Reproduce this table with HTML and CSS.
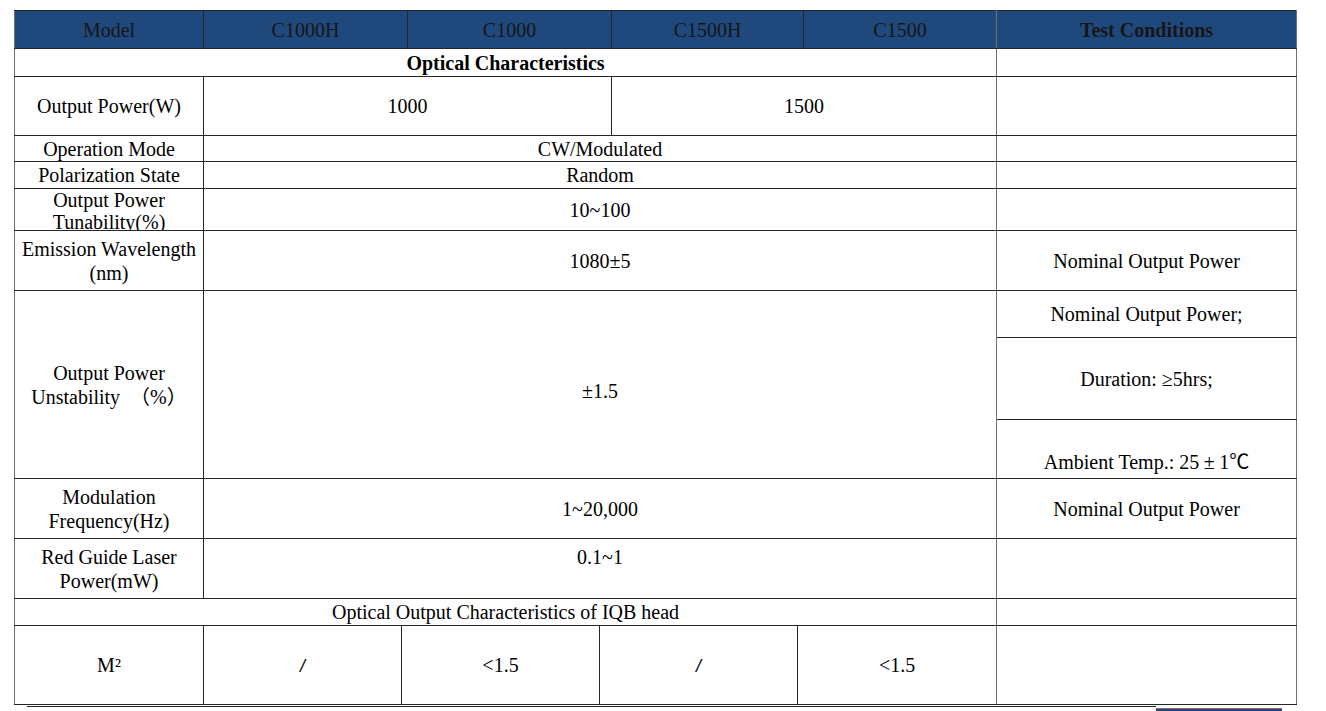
FILE: index.html
```html
<!DOCTYPE html>
<html lang="en">
<head>
<meta charset="utf-8">
<title>Specifications</title>
<link rel="stylesheet" href="styles.css">
</head>
<body>
<table class="spec">
  <colgroup>
    <col class="c1"><col class="c2"><col class="c3"><col class="c4"><col class="c5"><col class="c6"><col class="c7"><col class="c8"><col class="c9">
  </colgroup>
  <thead>
    <tr class="r-head">
      <th class="lbl">Model</th>
      <th colspan="2">C1000H</th>
      <th colspan="2">C1000</th>
      <th colspan="2">C1500H</th>
      <th>C1500</th>
      <th class="tc strong">Test Conditions</th>
    </tr>
  </thead>
  <tbody>
    <tr class="r-28">
      <td class="lbl strong" colspan="8">Optical Characteristics</td>
      <td class="tc"></td>
    </tr>
    <tr class="r-59">
      <td class="lbl">Output Power(W)</td>
      <td colspan="4">1000</td>
      <td colspan="3">1500</td>
      <td class="tc"></td>
    </tr>
    <tr class="r-26">
      <td class="lbl">Operation Mode</td>
      <td colspan="7">CW/Modulated</td>
      <td class="tc"></td>
    </tr>
    <tr class="r-27">
      <td class="lbl">Polarization State</td>
      <td colspan="7">Random</td>
      <td class="tc"></td>
    </tr>
    <tr class="r-42">
      <td class="lbl top"><div class="clip">Output Power Tunability(%)</div></td>
      <td colspan="7">10~100</td>
      <td class="tc"></td>
    </tr>
    <tr class="r-60">
      <td class="lbl">Emission Wavelength (nm)</td>
      <td colspan="7">1080±5</td>
      <td class="tc">Nominal Output Power</td>
    </tr>
    <tr class="r-47">
      <td class="lbl" rowspan="3">Output Power<br>Unstability　（%）</td>
      <td colspan="7" rowspan="3" class="low">±1.5</td>
      <td class="tc">Nominal Output Power;</td>
    </tr>
    <tr class="r-82">
      <td class="tc">Duration: ≥5hrs;</td>
    </tr>
    <tr class="r-59">
      <td class="tc bottom">Ambient Temp.: 25<span class="wide">±</span>1℃</td>
    </tr>
    <tr class="r-60">
      <td class="lbl">Modulation Frequency(Hz)</td>
      <td colspan="7">1~20,000</td>
      <td class="tc">Nominal Output Power</td>
    </tr>
    <tr class="r-60">
      <td class="lbl">Red Guide Laser Power(mW)</td>
      <td colspan="7" class="top pad-top">0.1~1</td>
      <td class="tc"></td>
    </tr>
    <tr class="r-27">
      <td class="lbl" colspan="8">Optical Output Characteristics of IQB head</td>
      <td class="tc"></td>
    </tr>
    <tr class="r-79">
      <td class="lbl">M²</td>
      <td><span class="slash">/</span></td>
      <td colspan="2">&lt;1.5</td>
      <td colspan="2"><span class="slash">/</span></td>
      <td colspan="2">&lt;1.5</td>
      <td class="tc"></td>
    </tr>
  </tbody>
</table>
<div class="footer">
  <div class="footer-line"></div>
  <div class="footer-tab"></div>
</div>
</body>
</html>
```

FILE: styles.css
```css
html, body {
  margin: 0;
  padding: 0;
  background: #ffffff;
}

body {
  font-family: "Liberation Serif", "Noto Sans CJK SC", serif;
  font-size: 20px;
  color: #000000;
}

.spec {
  table-layout: fixed;
  border-collapse: collapse;
  width: 1283px;
  margin: 10px 0 0 14px;
}

.c1 { width: 189px; }
.c2 { width: 198px; }
.c3 { width: 6px; }
.c4 { width: 192px; }
.c5 { width: 12px; }
.c6 { width: 186px; }
.c7 { width: 6px; }
.c8 { width: 193px; }
.c9 { width: 300px; }

.spec th,
.spec td {
  border: 1px solid #262626;
  padding: 0 2px;
  text-align: center;
  vertical-align: middle;
  line-height: 24px;
  font-weight: normal;
  overflow: hidden;
}

.spec th {
  background: #1f497d;
  color: #161616;
}

.spec .strong {
  font-weight: bold;
}

.spec .lbl {
  border-left-color: #707070;
}

.spec td:has(+ .tc),
.spec th:has(+ .tc) {
  border-right-color: #707070;
}

.spec .tc {
  border-right-color: #707070;
}

.r-head { height: 38px; }
.r-26 { height: 26px; }
.r-27 { height: 27px; }
.r-28 { height: 28px; }
.r-42 { height: 42px; }
.r-47 { height: 47px; }
.r-59 { height: 59px; }
.r-60 { height: 60px; }
.r-79 { height: 79px; }
.r-82 { height: 82px; }

.spec .top {
  vertical-align: top;
}

.spec .pad-top {
  padding-top: 6px;
}

.spec .bottom {
  vertical-align: bottom;
  padding-bottom: 4px;
}

.spec .low {
  padding-top: 12px;
}

.clip {
  height: 41px;
  line-height: 22px;
  overflow: hidden;
}

.wide {
  display: inline-block;
  width: 1em;
  text-align: center;
}

.slash {
  font-family: "Liberation Sans", sans-serif;
  font-style: italic;
  font-size: 18px;
}

.footer {
  display: flex;
  align-items: flex-start;
  margin: 1px 0 0 27px;
  width: 1255px;
}

.footer-line {
  flex: 1;
  height: 0;
  border-top: 1px solid #222222;
}

.footer-tab {
  width: 126px;
  height: 4px;
  margin-top: 2px;
  background: #1f497d;
  border-top: 1px solid #b0605a;
}
```
